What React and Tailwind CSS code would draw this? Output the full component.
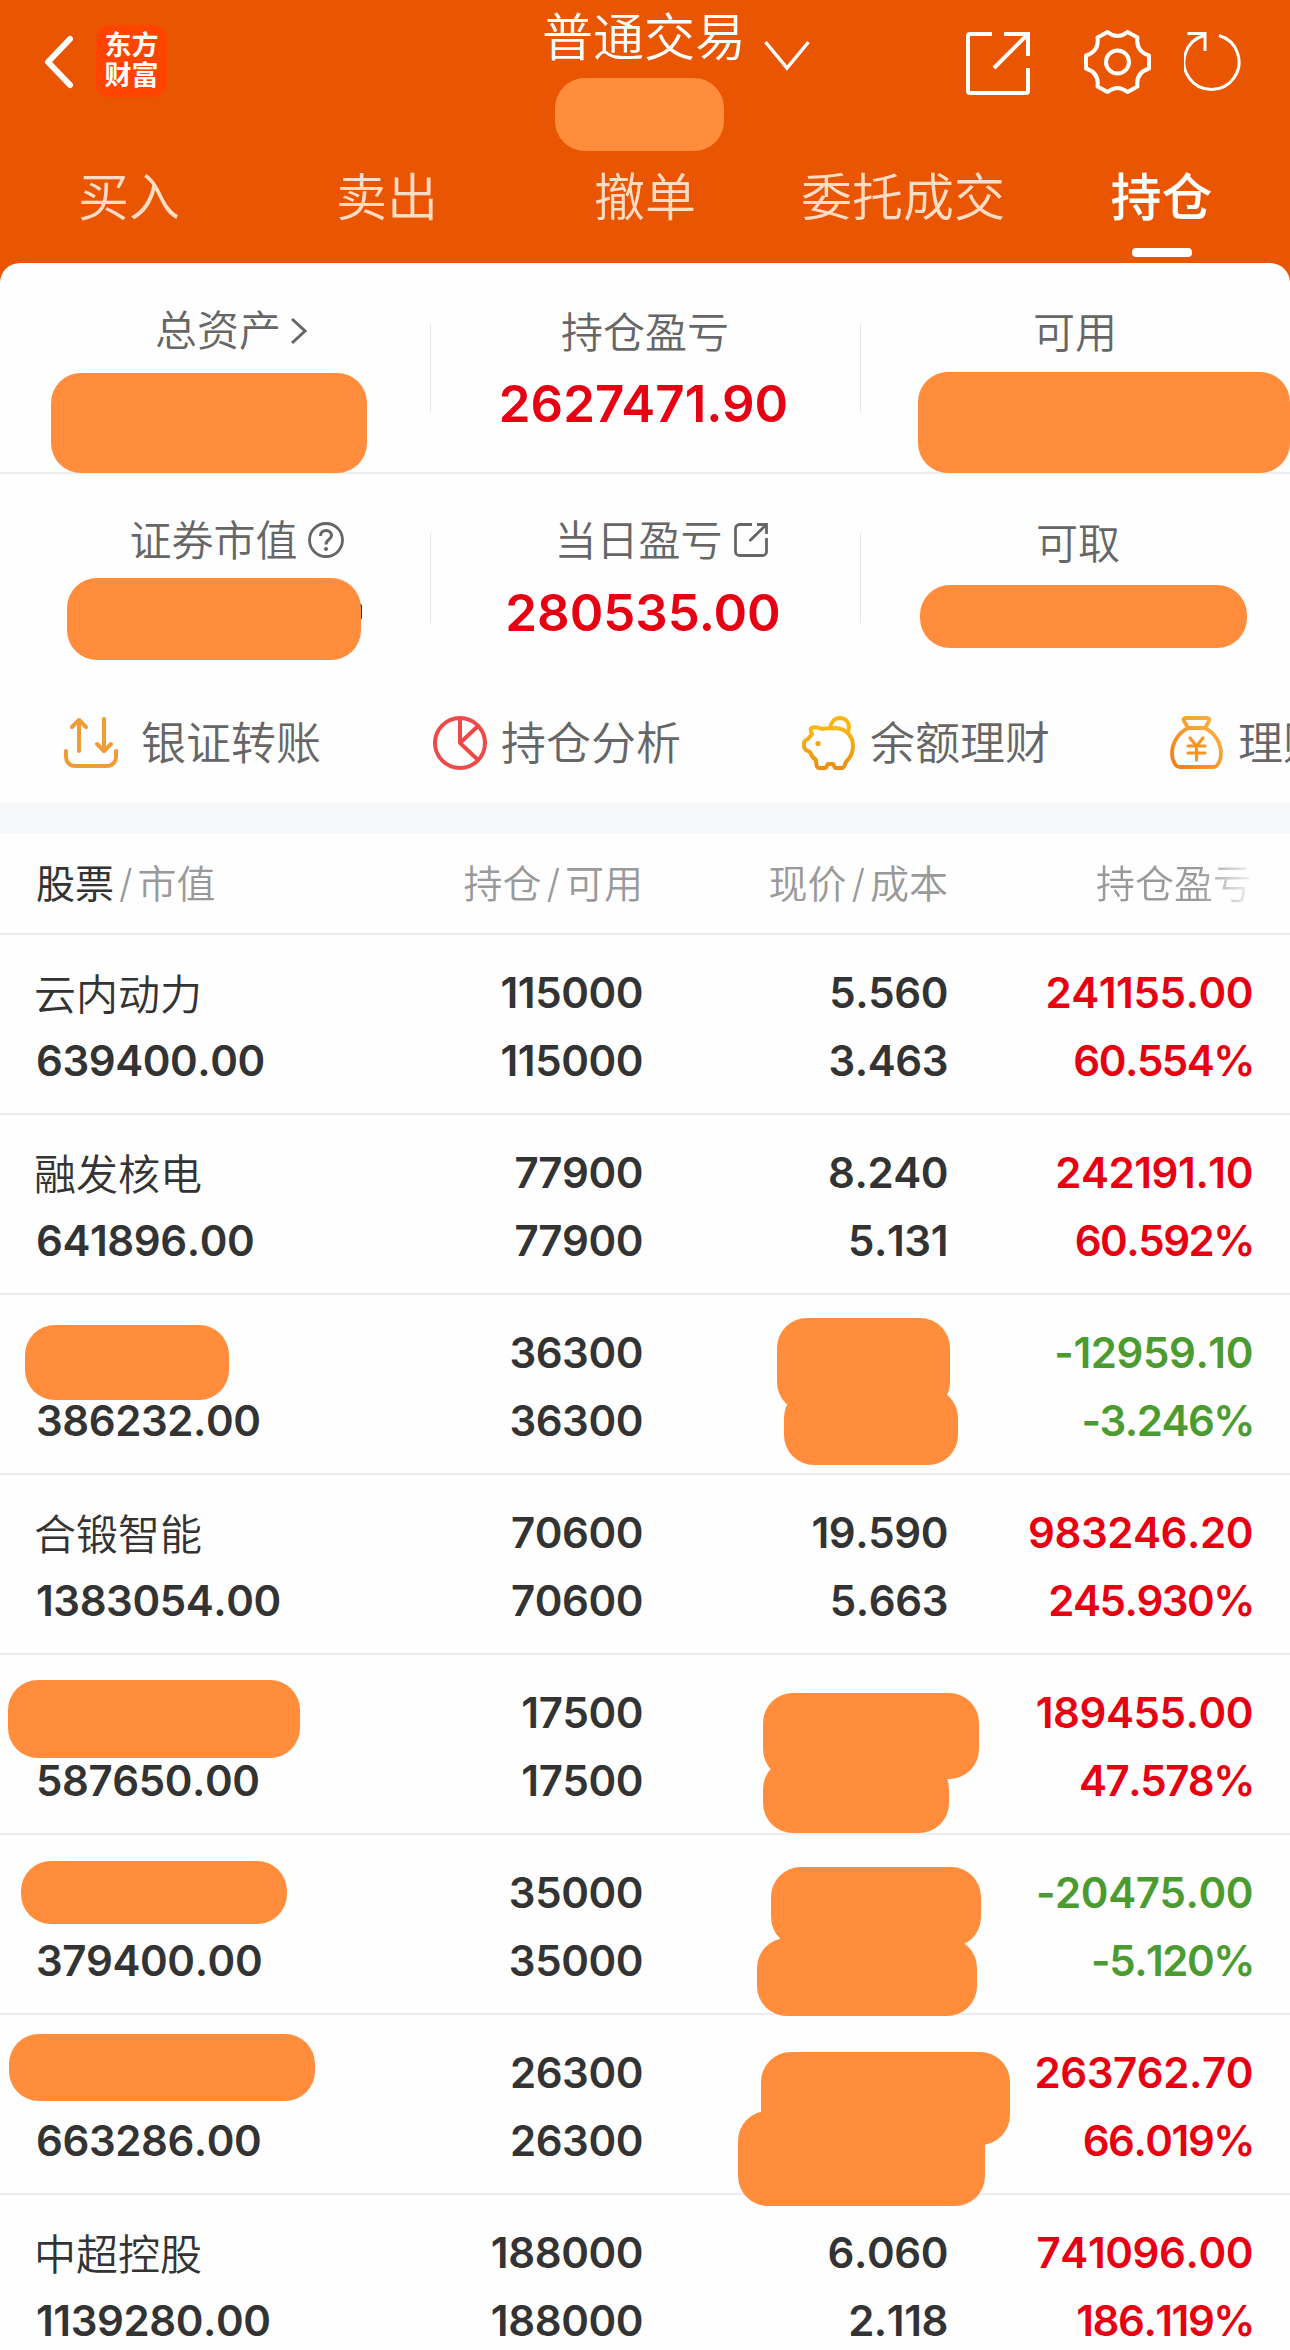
import React from "react";

const tabs = ["买入", "卖出", "撤单", "委托成交", "持仓"];

const holdings = [
  {
    name: "云内动力",
    value: "639400.00",
    amount: "115000",
    price: "5.560",
    cost: "3.463",
    profit: "241155.00",
    rate: "60.554%",
  },
  {
    name: "融发核电",
    value: "641896.00",
    amount: "77900",
    price: "8.240",
    cost: "5.131",
    profit: "242191.10",
    rate: "60.592%",
  },
  {
    value: "386232.00",
    amount: "36300",
    profit: "-12959.10",
    rate: "-3.246%",
    masks: [
      "left-[25px] top-[30px] w-[204px] h-[75px]",
      "left-[777px] top-[23px] w-[173px] h-[94px]",
      "left-[784px] top-[93px] w-[174px] h-[77px]",
    ],
  },
  {
    name: "合锻智能",
    value: "1383054.00",
    amount: "70600",
    price: "19.590",
    cost: "5.663",
    profit: "983246.20",
    rate: "245.930%",
  },
  {
    value: "587650.00",
    amount: "17500",
    profit: "189455.00",
    rate: "47.578%",
    masks: [
      "left-[8px] top-[25px] w-[292px] h-[78px]",
      "left-[763px] top-[38px] w-[216px] h-[86px]",
      "left-[763px] top-[104px] w-[186px] h-[74px]",
    ],
  },
  {
    value: "379400.00",
    amount: "35000",
    profit: "-20475.00",
    rate: "-5.120%",
    masks: [
      "left-[21px] top-[26px] w-[266px] h-[63px]",
      "left-[771px] top-[32px] w-[210px] h-[80px]",
      "left-[757px] top-[103px] w-[220px] h-[78px]",
    ],
  },
  {
    value: "663286.00",
    amount: "26300",
    profit: "263762.70",
    rate: "66.019%",
    masks: [
      "left-[9px] top-[19px] w-[306px] h-[67px]",
      "left-[761px] top-[37px] w-[249px] h-[93px]",
      "left-[738px] top-[96px] w-[247px] h-[95px]",
    ],
  },
  {
    name: "中超控股",
    value: "1139280.00",
    amount: "188000",
    price: "6.060",
    cost: "2.118",
    profit: "741096.00",
    rate: "186.119%",
  },
];

const Mask = ({ className }) => (
  <div className={`absolute z-10 rounded-[30px] bg-[#ff8d3b] ${className}`} />
);

const BackIcon = () => (
  <svg width="30" height="54" viewBox="0 0 30 54" fill="none">
    <path
      d="M26 4 4 27l22 23"
      stroke="#fff"
      strokeWidth="6"
      strokeLinecap="round"
      strokeLinejoin="round"
    />
  </svg>
);

const ShareIcon = () => (
  <svg width="64" height="63" viewBox="0 0 64 63" fill="none">
    <path
      d="M26 2H4a2 2 0 0 0-2 2v55a2 2 0 0 0 2 2h56a2 2 0 0 0 2-2V36M38 2h24v22M61 3 28 36"
      stroke="#fff"
      strokeWidth="4"
    />
  </svg>
);

const GearIcon = () => (
  <svg width="67" height="64" viewBox="0 0 67 64" fill="none">
    <path
      d="M23.5 2Q33.500 10 43.500 2L53.500 7.500Q51.500 21 65 25.500V38.500Q51.500 43 53.500 56.500L43.500 62Q33.500 54 23.500 62L13.500 56.500Q15.500 43 2 38.500V25.500Q15.500 21 13.500 7.500Z"
      stroke="#fff"
      strokeWidth="4"
      strokeLinejoin="round"
    />
    <circle cx="33.5" cy="32" r="11.500" stroke="#fff" strokeWidth="4" />
  </svg>
);

const RefreshIcon = () => (
  <svg width="58" height="60" viewBox="0 0 58 60" fill="none">
    <path
      d="M35 4.500A27.500 27.500 0 1 1 20 4.500M3.500 2.500H21V20"
      stroke="#fff"
      strokeWidth="3"
    />
  </svg>
);

const TransferIcon = () => (
  <svg width="54" height="52" viewBox="0 0 54 52" fill="none">
    <path
      d="M15 34V3M8 10l7-7 7 7M40 2v32M33 27l7 7 7-7M2 34v6a9 9 0 0 0 9 9h32a9 9 0 0 0 9-9v-6"
      stroke="#f09c35"
      strokeWidth="4"
      strokeLinecap="round"
      strokeLinejoin="round"
    />
  </svg>
);

const PieIcon = () => (
  <svg width="54" height="54" viewBox="0 0 54 54" fill="none">
    <path d="M27 2v25l18 17M27 27 45 10" stroke="#f04848" strokeWidth="4" />
    <circle cx="27" cy="27" r="25" stroke="#f04848" strokeWidth="4" />
  </svg>
);

const PiggyIcon = () => (
  <svg width="54" height="54" viewBox="0 0 54 54" fill="none">
    <defs>
      <linearGradient id="piggy" x1="0" y1="0" x2="0" y2="1">
        <stop offset="0" stopColor="#fbb90f" />
        <stop offset="1" stopColor="#ee8e14" />
      </linearGradient>
    </defs>
    <path
      d="M9 12c4-1.500 8-.5 11 1 4-1 9-1 13-1 12 .5 18 9 18 18 0 7-3 12-7 16-1 3-2 6-4 6h-6c-2 0-2-4-3-4h-5c-1 0-1 4-3 4h-6c-2 0-3-4-3-8-3-2-5-5-6-8l-4-2c-1-1-2-2-2-4v-3c0-2 2-3 4-4l4-5c-1-2-2-4-1-6Z"
      stroke="url(#piggy)"
      strokeWidth="4"
      strokeLinejoin="round"
    />
    <path
      d="M28 12c1-6 5-10 10-10 5 0 9 4 9 9 0 3-1 5-2 6"
      stroke="#fab513"
      strokeWidth="4"
    />
    <circle cx="16" cy="27.500" r="2.600" fill="#f5a514" />
  </svg>
);

const MoneyBagIcon = () => (
  <svg width="54" height="54" viewBox="0 0 54 54" fill="none">
    <defs>
      <linearGradient id="bag" x1="1" y1="0" x2="0" y2="1">
        <stop offset="0" stopColor="#fbb748" />
        <stop offset="1" stopColor="#ef7f16" />
      </linearGradient>
    </defs>
    <path
      d="M16 2h21c2 0 3 1 2 3l-4 7c10 5 16 15 16 26 0 4-1 7-3 10-1 2-3 3-5 3H10c-2 0-4-1-5-3-2-3-3-6-3-10 0-11 6-21 16-26l-4-7c-1-2 0-3 2-3ZM18 12h17"
      stroke="url(#bag)"
      strokeWidth="3.800"
      strokeLinejoin="round"
    />
    <path
      d="m20 22 6.500 8 6.500-8M26.500 30v14M18 30h17M18 37h17"
      stroke="#f59524"
      strokeWidth="3.200"
      strokeLinecap="round"
    />
  </svg>
);

const HelpIcon = () => (
  <svg width="36" height="36" viewBox="0 0 36 36" fill="none">
    <circle cx="18" cy="18" r="16.500" stroke="#666" strokeWidth="2.800" />
    <path
      d="M12.500 14c0-3.500 2.500-5.500 5.500-5.500s5.500 2 5.500 5c0 4-5.500 4-5.500 9"
      stroke="#666"
      strokeWidth="3"
    />
    <circle cx="18" cy="27" r="2" fill="#666" />
  </svg>
);

const LinkIcon = () => (
  <svg width="34" height="34" viewBox="0 0 34 34" fill="none">
    <path
      d="M18 1.500H5.500a4 4 0 0 0-4 4v23a4 4 0 0 0 4 4h23a4 4 0 0 0 4-4V15M23 1.500h9.500V11M32 2 15.500 18"
      stroke="#666"
      strokeWidth="2.800"
    />
  </svg>
);

const Header = () => (
  <header className="h-[283px] bg-[#ea5502] text-white">
    <div className="flex h-[151px] justify-between">
      <div className="flex w-[430px] items-start pl-[44px]">
        <div className="mt-[35px]">
          <BackIcon />
        </div>
        <div className="ml-[22px] mt-[25px] flex h-[72px] w-[71px] flex-col items-center justify-center rounded-[14px] bg-[#ff4400] text-[27px] leading-[30px] font-bold">
          <span>东方</span>
          <span>财富</span>
        </div>
      </div>
      <div className="flex w-[430px] flex-col pl-[112px]">
        <div className="flex h-[78px] items-start">
          <h1 className="text-[51px] leading-[76px] font-[350]">普通交易</h1>
          <svg className="mt-[40px] ml-[18px]" width="46" height="31" viewBox="0 0 46 31" fill="none">
            <path d="M1.500 2 23 28 44.500 2" stroke="#fff" strokeWidth="3.500" />
          </svg>
        </div>
        <div className="ml-[13px] h-[73px] w-[169px] rounded-[30px] bg-[#ff8d3b]" />
      </div>
      <div className="flex w-[430px] items-start pl-[106px]">
        <div className="mt-[32px]">
          <ShareIcon />
        </div>
        <div className="mt-[30px] ml-[54px]">
          <GearIcon />
        </div>
        <div className="mt-[31px] ml-[33px]">
          <RefreshIcon />
        </div>
      </div>
    </div>
    <nav className="grid h-[112px] grid-cols-5 text-[51px] leading-[93px] font-[350]">
      {tabs.map((tab) =>
        tab === "持仓" ? (
          <div key={tab} className="flex flex-col items-center pl-[1px] font-medium">
            <span>{tab}</span>
            <i className="mt-[4px] h-[9px] w-[60px] rounded-[4px] bg-white" />
          </div>
        ) : (
          <div key={tab} className="text-center text-[#ffdcc5]">
            {tab}
          </div>
        )
      )}
    </nav>
  </header>
);

const Summary = () => (
  <section className="-mt-[20px] rounded-t-[20px] bg-[#fefefe] text-[42px] leading-[62px] font-[350] text-[#666]">
    <div className="relative grid h-[211px] grid-cols-3 border-b-2 border-[#ededed]">
      <div className="flex justify-center pt-[37px]">
        <span className="ml-[32px]">总资产</span>
        <svg className="mt-[17px] ml-[9px]" width="17" height="28" viewBox="0 0 17 28" fill="none">
          <path d="m2 2 13 12L2 26" stroke="#666" strokeWidth="3" />
        </svg>
      </div>
      <div className="pt-[39px] text-center">
        <div>持仓盈亏</div>
        <div className="pt-[10px] pr-[3px] text-[51px] leading-[60px] font-semibold text-[#e60012]">
          2627471.90
        </div>
      </div>
      <div className="pt-[39px] text-center">可用</div>
      <i className="absolute top-[60px] left-[430px] h-[90px] w-px bg-[#e6e6e6]" />
      <i className="absolute top-[60px] left-[860px] h-[90px] w-px bg-[#e6e6e6]" />
      <Mask className="top-[110px] left-[51px] h-[100px] w-[316px]" />
      <Mask className="top-[109px] left-[918px] h-[101px] w-[372px]" />
    </div>
    <div className="relative grid h-[210px] grid-cols-3">
      <div className="flex justify-center pt-[36px]">
        <span className="ml-[43px]">证券市值</span>
        <div className="mt-[12px] ml-[10px]">
          <HelpIcon />
        </div>
      </div>
      <div className="pt-[36px] text-center">
        <div className="flex justify-center pl-[32px]">
          <span>当日盈亏</span>
          <div className="mt-[13px] ml-[11px]">
            <LinkIcon />
          </div>
        </div>
        <div className="pt-[11px] pr-[4px] text-[51px] leading-[60px] font-semibold text-[#e60012]">
          280535.00
        </div>
      </div>
      <div className="pt-[39px] pl-[6px] text-center">可取</div>
      <i className="absolute top-[59px] left-[430px] h-[90px] w-px bg-[#e6e6e6]" />
      <i className="absolute top-[59px] left-[860px] h-[90px] w-px bg-[#e6e6e6]" />
      <i className="absolute top-[129px] left-[354px] h-[18px] w-[8px] rounded-full bg-[#333]" />
      <Mask className="top-[104px] left-[67px] h-[82px] w-[294px]" />
      <Mask className="top-[111px] left-[920px] h-[63px] w-[327px]" />
    </div>
    <div className="flex h-[119px] overflow-hidden pl-[64px] text-[45px] whitespace-nowrap">
      <div className="flex w-[369px] shrink-0 pt-[29px]">
        <div className="mt-[4px] mr-[23px]">
          <TransferIcon />
        </div>
        银证转账
      </div>
      <div className="flex w-[369px] shrink-0 pt-[29px]">
        <div className="mt-[3px] mr-[14px]">
          <PieIcon />
        </div>
        持仓分析
      </div>
      <div className="flex w-[368px] shrink-0 pt-[29px]">
        <div className="mt-[3px] mr-[14px]">
          <PiggyIcon />
        </div>
        余额理财
      </div>
      <div className="flex w-[369px] shrink-0 pt-[29px]">
        <div className="mt-[3px] mr-[14px]">
          <MoneyBagIcon />
        </div>
        理财
      </div>
    </div>
  </section>
);

const HoldingRow = ({ item }) => {
  const color = item.profit.startsWith("-") ? "text-[#4b9b30]" : "text-[#e60012]";
  return (
    <div className="relative grid h-[180px] grid-cols-[337px_306px_305px_305px] border-b-2 border-[#ededed] pt-[24px] text-right text-[42px] leading-[68px] font-semibold tracking-[-0.010em] text-[#333] [font-kerning:none]">
      <div className="text-left">
        <div className="h-[68px] pl-[34px] leading-[71px] font-[350] tracking-normal">{item.name}</div>
        <div className="pl-[36px]">{item.value}</div>
      </div>
      <div>
        <div>{item.amount}</div>
        <div>{item.amount}</div>
      </div>
      <div>
        <div>{item.price}</div>
        <div>{item.cost}</div>
      </div>
      <div className={color}>
        <div>{item.profit}</div>
        <div className="-mr-[1px] tracking-[-0.035em]">{item.rate}</div>
      </div>
      {item.masks && item.masks.map((mask) => <Mask key={mask} className={mask} />)}
    </div>
  );
};

const App = () => {
  return (
    <div className="h-[2350px] w-[1290px] overflow-hidden bg-[#fefefe] font-['Inter','Noto_Sans_CJK_SC',sans-serif]">
      <Header />
      <Summary />
      <div className="h-[30px] bg-[#f7f8fa]" />
      <div className="grid h-[102px] grid-cols-[337px_306px_305px_305px] border-b-2 border-[#ededed] text-right text-[39px] leading-[102px] font-[350] text-[#999]">
        <div className="pl-[36px] text-left">
          <span className="font-normal text-[#333]">股票</span>
          <span className="px-[5px]">/</span>市值
        </div>
        <div>
          持仓<span className="px-[5px]">/</span>可用
        </div>
        <div>
          现价<span className="px-[5px]">/</span>成本
        </div>
        <div className="pr-[1px]">
          <span className="bg-linear-to-r from-[#999] from-65% to-[#f4f4f4] bg-clip-text text-transparent">
            持仓盈亏
          </span>
        </div>
      </div>
      {holdings.map((item) => (
        <HoldingRow key={item.value} item={item} />
      ))}
    </div>
  );
};

export default App;
